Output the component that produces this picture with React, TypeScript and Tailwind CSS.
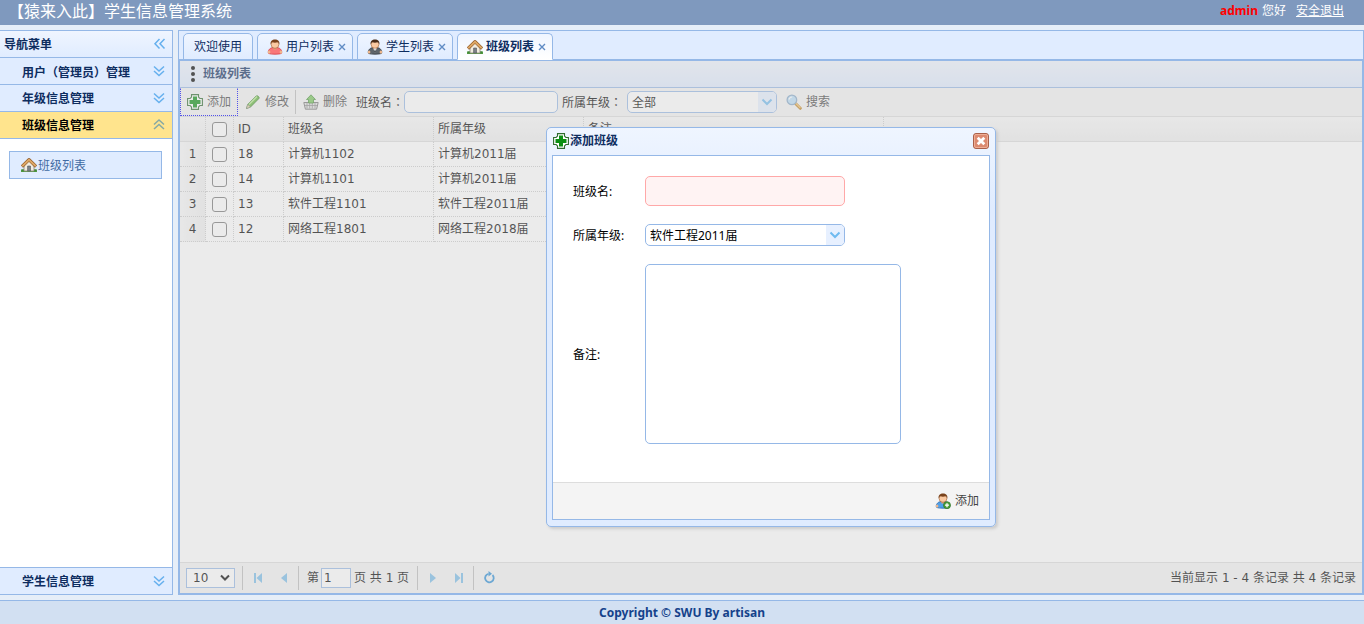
import type { ReactNode } from "react";

const rows = [
  { id: 18, name: "计算机1102", grade: "计算机2011届" },
  { id: 14, name: "计算机1101", grade: "计算机2011届" },
  { id: 13, name: "软件工程1101", grade: "软件工程2011届" },
  { id: 12, name: "网络工程1801", grade: "网络工程2018届" },
];

function HomeIcon() {
  return (
    <svg className="h-4 w-4 shrink-0" viewBox="0 0 16 16" aria-hidden="true">
      <path d="M0 13.200h16V15H0z" fill="#5fa04a" />
      <path d="M.3 12.200h3v2.200h-3zM12.700 12.200h3v2.200h-3z" fill="#3f8a35" />
      <path d="M3 7.500 8 3l5 4.500V14H3z" fill="#f1ece0" stroke="#8a8578" strokeWidth=".8" />
      <path d="M6.600 9h2.900v5H6.600z" fill="#7d8288" stroke="#54585c" strokeWidth=".6" />
      <path d="M.9 9.500 8 2.600l7.100 6.900" fill="none" stroke="#8a5420" strokeWidth="3.200" strokeLinejoin="round" />
      <path d="M1.200 9.200 8 2.700l6.800 6.500" fill="none" stroke="#dda766" strokeWidth="2" strokeLinejoin="round" />
    </svg>
  );
}

function PersonIcon({ tone }: { tone: "red" | "gray" | "blue" }) {
  const body = { red: "#f9777a", gray: "#5d646b", blue: "#4f9fe8" }[tone];
  const edge = { red: "#d93a40", gray: "#33383d", blue: "#2467ad" }[tone];
  return (
    <svg className="h-4 w-4 shrink-0" viewBox="0 0 16 16" aria-hidden="true">
      <path d="M1.500 14.300c-.8-2.300.7-5 3.700-5.600h5.600c3 .6 4.500 3.300 3.700 5.600-2 1.200-11 1.200-13 0z" fill={body} stroke={edge} strokeWidth=".8" />
      <ellipse cx="2.100" cy="13" rx="1.300" ry="1.500" fill="#f0b88c" />
      <ellipse cx="13.900" cy="13" rx="1.300" ry="1.500" fill="#f0b88c" />
      <path d="M6 8h4l-.6 2.400H6.600z" fill="#e5a478" />
      <ellipse cx="8" cy="5.500" rx="3.900" ry="3.800" fill="#fac9a1" stroke="#985c35" strokeWidth=".6" />
      <path d="M3.600 5.500C3.100 2 5.200.4 8 .4s4.900 1.600 4.400 5.100c-.5-1.500-1-2-1.800-2.200-1.900.6-3.500.6-5.200 0-.8.4-1.500 1-1.800 2.200z" fill={tone === "gray" ? "#4a2c18" : "#7a431c"} />
      {tone === "gray" && <path d="m6.500 9.500 1.500 4.300 1.500-4.300z" fill="#eef1f3" />}
      {tone === "gray" && <path d="m8 10 .6 2.500-.6 1-.6-1z" fill="#22272b" />}
      {tone === "blue" && (
        <>
          <circle cx="12" cy="12.200" r="3.500" fill="#4fa03d" stroke="#2d7224" strokeWidth=".7" />
          <path d="M12 10.200v4M10 12.200h4" stroke="#fff" strokeWidth="1.300" />
        </>
      )}
    </svg>
  );
}

function AddIcon() {
  return (
    <svg className="h-4 w-4 shrink-0" viewBox="0 0 16 16" aria-hidden="true">
      <path
        d="M4.500.6h7v2.500l1.400 1.400h2.500v7h-2.500l-1.400 1.400v2.500h-7v-2.500l-1.400-1.400H.6v-7h2.500l1.400-1.400z"
        fill="#fff"
        stroke="#2f6b2f"
        strokeWidth="1.100"
      />
      <path d="M6 2.500h4V6h3.500v4H10v3.500H6V10H2.500V6H6z" fill="#0b8f12" />
    </svg>
  );
}

function EditIcon() {
  return (
    <svg className="h-4 w-4 shrink-0" viewBox="0 0 16 16" aria-hidden="true">
      <path d="m1.500 14.500 1.200-4L11.200 2c1.200-1 3.700 1.200 2.700 2.500L5.500 13z" fill="#63b83e" stroke="#367d24" strokeWidth=".9" />
      <path d="m4 10.500 8-8" stroke="#b9eb91" strokeWidth="1.300" />
      <path d="m1.500 14.500 1.200-4L5.500 13z" fill="#e4d3a5" stroke="#777" strokeWidth=".5" />
    </svg>
  );
}

function RemoveIcon() {
  return (
    <svg className="h-4 w-4 shrink-0" viewBox="0 0 16 16" aria-hidden="true">
      <path d="M.8 8.500h14.400l-1.600 6.700H2.400z" fill="#e3e3e3" stroke="#777" />
      <path d="M4 9v5.500M6.700 9v5.500M9.300 9v5.500M12 9v5.500M2 11.500h12" stroke="#888" strokeWidth=".8" />
      <path d="m8 .8 4.500 4.700H10.500V9h-5V5.500h-2z" fill="#79c65a" stroke="#3c8a2d" strokeWidth=".8" />
    </svg>
  );
}

function SearchIcon() {
  return (
    <svg className="h-4 w-4 shrink-0" viewBox="0 0 16 16" aria-hidden="true">
      <path d="m9.500 9.500 4.800 4.800" stroke="#c18322" strokeWidth="3" strokeLinecap="round" />
      <path d="m10 9.500 4 4" stroke="#f3c36b" strokeWidth="1.200" strokeLinecap="round" />
      <circle cx="5.900" cy="5.900" r="4.800" fill="#b9def8" stroke="#88a9c9" strokeWidth="1.300" />
      <path d="M3 5.500c.4-1.600 1.600-2.500 3.200-2.500" fill="none" stroke="#fff" strokeWidth="1.200" />
    </svg>
  );
}

function CloseIcon() {
  return (
    <svg className="h-4 w-4" viewBox="0 0 16 16" aria-hidden="true">
      <rect x=".5" y=".5" width="15" height="15" rx="2.500" fill="#dc8a70" stroke="#a9604a" />
      <rect x="1.500" y="1.500" width="13" height="13" rx="1.500" fill="none" stroke="#eeae96" />
      <path d="m4.700 4.700 6.600 6.600M11.300 4.700l-6.600 6.600" stroke="#fff" strokeWidth="2.800" />
    </svg>
  );
}

function DoubleChevron({ dir }: { dir: "left" | "up" | "down" }) {
  const paths = {
    left: "M8.500 3 4 7.700l4.500 4.800M13.500 3 9 7.700l4.500 4.800",
    up: "m3 7.500 5-4.500 5 4.500M3 12l5-4.500 5 4.500",
    down: "m3 3.500 5 4.500 5-4.500M3 8l5 4.500L13 8",
  };
  return (
    <svg className="h-4 w-4 shrink-0" viewBox="0 0 16 16" aria-hidden="true">
      <path d={paths[dir]} fill="none" stroke={dir === "up" ? "#86a9a5" : "#66b0ee"} strokeWidth="1.500" />
    </svg>
  );
}

function Combo({ id, value, className }: { id: string; value: string; className: string }) {
  return (
    <div className={`relative h-[22px] overflow-hidden rounded-[5px] border border-[#95B8E7] bg-white ${className}`}>
      <select id={id} className="block h-5 w-full appearance-none bg-transparent pt-0.5 pl-1 text-xs outline-none">
        <option>{value}</option>
      </select>
      <span className="pointer-events-none absolute inset-y-0 right-0 flex w-[18px] items-center justify-center bg-[#E7F0FF]">
        <svg className="h-3 w-3" viewBox="0 0 12 12" aria-hidden="true">
          <path d="m1.500 3.500 4.500 4.500 4.500-4.500" fill="none" stroke="#6fbbf0" strokeWidth="2" />
        </svg>
      </span>
    </div>
  );
}

// Full-width punctuation sits in the middle of its box
function Mark({ children }: { children: string }) {
  return <span className="font-['Noto_Sans_CJK_TC',sans-serif]">{children}</span>;
}

function SidebarItem({ label, open = false, className = "" }: { label: ReactNode; open?: boolean; className?: string }) {
  return (
    <button
      type="button"
      aria-expanded={open}
      className={`flex h-[27px] w-full shrink-0 items-center justify-between border-b border-[#95B8E7] pr-[5px] pl-[22px] text-xs font-bold ${
        open ? "bg-[#FFE48D] text-black" : "bg-[#E0ECFF] text-[#0E2D5F]"
      } ${className}`}
    >
      <span className="pt-0.5">{label}</span>
      <DoubleChevron dir={open ? "up" : "down"} />
    </button>
  );
}

function Tab({ label, icon, active = false }: { label: string; icon: ReactNode; active?: boolean }) {
  return (
    <div
      className={`flex h-[27px] items-center rounded-t-[5px] border border-[#95B8E7] pr-[5px] pl-[9px] text-[#0E2D5F] ${
        active ? "border-b-white bg-linear-to-b from-[#EFF5FF] to-white font-bold" : "bg-linear-to-b from-[#EFF5FF] to-[#E0ECFF]"
      }`}
    >
      {icon}
      <button type="button" role="tab" aria-selected={active} className="ml-[3px] text-xs">
        {label}
      </button>
      <button type="button" aria-label={`关闭${label}`} className="ml-[3px]">
        <svg className="h-2.5 w-2.5" viewBox="0 0 10 10" aria-hidden="true">
          <path d="m2 2 6 6M8 2 2 8" stroke="#5f8bc4" strokeWidth="1.400" />
        </svg>
      </button>
    </div>
  );
}

function ToolButton({ label, icon, className = "" }: { label: string; icon: ReactNode; className?: string }) {
  return (
    <button type="button" className={`flex items-center gap-1 text-[#444] ${className}`}>
      {icon}
      {label}
    </button>
  );
}

function PageButton({ label, d }: { label: string; d: string }) {
  return (
    <button type="button" aria-label={label} className="flex h-[26px] w-[26px] items-center justify-center">
      <svg className="h-4 w-4" viewBox="0 0 16 16" aria-hidden="true">
        <path d={d} fill="#79bce9" />
      </svg>
    </button>
  );
}

function Divider() {
  return <span className="h-6 w-px bg-[#bbb]" />;
}

function Checkbox({ label }: { label: string }) {
  return (
    <input
      type="checkbox"
      aria-label={label}
      className="block h-[15px] w-[15px] appearance-none rounded-[3px] border border-[#767676] bg-white"
    />
  );
}

function DataTable() {
  const cell = "border-r border-b border-dotted border-[#ccc]";
  return (
    <table className="w-full table-fixed border-separate border-spacing-0 text-left">
      <colgroup>
        <col className="w-[26px]" />
        <col className="w-7" />
        <col className="w-[50px]" />
        <col className="w-[150px]" />
        <col className="w-[150px]" />
        <col className="w-[300px]" />
        <col />
      </colgroup>
      <thead>
        <tr className="h-[25px] bg-linear-to-b from-[#F9F9F9] to-[#EFEFEF] *:border-b *:border-b-[#ddd] *:font-normal">
          <th className="border-r border-r-[#ccc] [border-right-style:dotted]" />
          <th className="border-r border-r-[#ccc] pl-1.5 [border-right-style:dotted]">
            <Checkbox label="全选" />
          </th>
          <th className="border-r border-r-[#ccc] pl-1 [border-right-style:dotted]">ID</th>
          <th className="border-r border-r-[#ccc] pl-1 [border-right-style:dotted]">班级名</th>
          <th className="border-r border-r-[#ccc] pl-1 [border-right-style:dotted]">所属年级</th>
          <th className="border-r border-r-[#ccc] pl-1 [border-right-style:dotted]">备注</th>
          <th />
        </tr>
      </thead>
      <tbody>
        {rows.map((row, i) => (
          <tr key={row.id} className="h-[25px]">
            <td className={`${cell} bg-linear-to-r from-[#F9F9F9] to-[#EFEFEF] text-center`}>{i + 1}</td>
            <td className={`${cell} pl-1.5`}>
              <Checkbox label={row.name} />
            </td>
            <td className={`${cell} pl-1`}>{row.id}</td>
            <td className={`${cell} pl-1`}>{row.name}</td>
            <td className={`${cell} pl-1`}>{row.grade}</td>
            <td className={cell} />
            <td />
          </tr>
        ))}
      </tbody>
    </table>
  );
}

function AddDialog() {
  return (
    <div
      role="dialog"
      aria-label="添加班级"
      className="relative flex h-[400px] w-[450px] flex-col rounded-[5px] border border-[#95B8E7] bg-linear-to-b from-[#EFF5FF] to-[#E0ECFF] to-20% px-[5px] pb-1.5 font-['Noto_Sans','Noto_Sans_CJK_SC',sans-serif] text-xs shadow-[2px_2px_3px_#ccc]"
    >
      <div className="flex h-[27px] shrink-0 items-center justify-between px-px pb-0.5">
        <h2 className="flex items-center gap-px font-bold text-[#0E2D5F]">
          <AddIcon />
          添加班级
        </h2>
        <button type="button" aria-label="关闭">
          <CloseIcon />
        </button>
      </div>
      <form className="flex min-h-0 flex-1 flex-col border border-[#95B8E7] bg-white text-black">
        <div className="grid flex-1 grid-cols-[72px_1fr] content-start items-center gap-y-[18px] p-5">
          <label htmlFor="class-name" className="pt-0.5">
            班级名:
          </label>
          <input id="class-name" className="h-[30px] w-[200px] rounded-[5px] border border-[#ffa8a8] bg-[#fff3f3] px-1 outline-none" />
          <label htmlFor="class-grade" className="pt-0.5">
            所属年级:
          </label>
          <Combo id="class-grade" value="软件工程2011届" className="w-[200px]" />
          <label htmlFor="class-note" className="pt-0.5">
            备注:
          </label>
          <textarea id="class-note" className="block h-[180px] w-64 resize-none rounded-[5px] border border-[#95B8E7] bg-white p-1 outline-none" />
        </div>
        <div className="flex h-[37px] shrink-0 items-center justify-end border-t border-[#ddd] bg-[#F4F4F4] pr-2.5">
          <button type="button" className="flex items-center gap-1 text-[#444]">
            <PersonIcon tone="blue" />
            添加
          </button>
        </div>
      </form>
    </div>
  );
}

export default function App() {
  return (
    <div className="flex h-screen flex-col overflow-hidden bg-[#E6EEF8] font-['Noto_Sans','Noto_Sans_CJK_SC',sans-serif] text-xs">
      <header className="flex h-[25px] shrink-0 items-center justify-between bg-[#7F99BE] pr-5 pb-1 pl-2 text-white">
        <h1 className="text-base leading-5">【猿来入此】学生信息管理系统</h1>
        <div className="flex items-center">
          <span className="mr-1 font-bold text-[#f00]">admin</span>
          <span className="mr-2.5">您好</span>
          <a href="#logout" className="underline">
            安全退出
          </a>
        </div>
      </header>

      <div className="flex min-h-0 flex-1 gap-[5px] py-[5px]">
        <nav className="flex w-[173px] shrink-0 flex-col border-t border-r border-b border-[#95B8E7] bg-white">
          <div className="flex h-[27px] shrink-0 items-center justify-between border-b border-[#95B8E7] bg-linear-to-b from-[#EFF5FF] to-[#E0ECFF] pr-[5px] pl-1 font-bold text-[#0E2D5F]">
            <span className="pt-0.5">导航菜单</span>
            <DoubleChevron dir="left" />
          </div>
          <SidebarItem
            label={
              <>
                用户<Mark>（</Mark>管理员<Mark>）</Mark>管理
              </>
            }
          />
          <SidebarItem label="年级信息管理" />
          <SidebarItem label="班级信息管理" open />
          <div className="flex-1 py-3 pr-2.5 pl-[9px]">
            <a
              href="#classes"
              className="flex h-7 items-center border border-[#95B8E7] bg-[#E0ECFF] pl-[11px] text-[#416AA3]"
            >
              <HomeIcon />
              <span className="ml-px pt-0.5">班级列表</span>
            </a>
          </div>
          <SidebarItem label="学生信息管理" className="border-t border-b-0" />
        </nav>

        <main className="flex min-w-0 flex-1 flex-col border border-[#95B8E7]">
          <div role="tablist" className="flex h-[29px] shrink-0 items-start gap-1 border-b border-[#95B8E7] bg-[#E0ECFF] pt-0.5 pl-1">
            <button
              type="button"
              role="tab"
              aria-selected="false"
              className="h-[27px] rounded-t-[5px] border border-[#95B8E7] bg-linear-to-b from-[#EFF5FF] to-[#E0ECFF] px-2.5 text-[#0E2D5F]"
            >
              欢迎使用
            </button>
            <Tab label="用户列表" icon={<PersonIcon tone="red" />} />
            <Tab label="学生列表" icon={<PersonIcon tone="gray" />} />
            <Tab label="班级列表" icon={<HomeIcon />} active />
          </div>

          <section className="relative flex min-h-0 flex-1 flex-col border border-[#95B8E7] bg-white font-['DejaVu_Sans','Noto_Sans_CJK_SC',sans-serif]">
            <h2 className="flex h-[27px] shrink-0 items-center border-b border-[#95B8E7] bg-linear-to-b from-[#EFF5FF] to-[#E0ECFF] pl-[5px] font-bold text-[#0E2D5F]">
              <svg className="mr-0.5 h-4 w-4" viewBox="0 0 16 16" aria-hidden="true">
                <circle cx="8" cy="2" r="2" />
                <circle cx="8" cy="8" r="2" />
                <circle cx="8" cy="14" r="2" />
              </svg>
              班级列表
            </h2>
            <div className="flex h-[29px] shrink-0 items-center border-b border-[#ddd] bg-[#F4F4F4]">
              <ToolButton label="添加" icon={<AddIcon />} className="h-7 border border-dotted border-[#00f] border-t-transparent px-1.5" />
              <ToolButton label="修改" icon={<EditIcon />} className="pr-1.5 pl-[7px]" />
              <Divider />
              <ToolButton label="删除" icon={<RemoveIcon />} className="pr-[9px] pl-[7px]" />
              <label htmlFor="filter-name">
                班级名<Mark>：</Mark>
              </label>
              <input id="filter-name" className="mr-1 h-[22px] w-[154px] rounded-[5px] border border-[#95B8E7] bg-white px-1" />
              <label htmlFor="filter-grade" className="mr-[5px]">
                所属年级<Mark>：</Mark>
              </label>
              <Combo id="filter-grade" value="全部" className="w-[150px]" />
              <ToolButton label="搜索" icon={<SearchIcon />} className="ml-[9px]" />
            </div>
            <div className="min-h-0 flex-1">
              <DataTable />
            </div>
            <div className="flex h-[31px] shrink-0 items-center border-t border-[#ddd] bg-[#F4F4F4] pl-1.5">
              <div className="relative mr-[7px] h-5 w-[49px] border border-[#95B8E7] bg-white">
                <select aria-label="每页条数" className="block h-[18px] w-full appearance-none bg-transparent pl-1.5 outline-none">
                  <option>10</option>
                </select>
                <svg className="pointer-events-none absolute top-1 right-1 h-2.5 w-2.5" viewBox="0 0 10 10" aria-hidden="true">
                  <path d="m1 2.500 4 4 4-4" fill="none" stroke="#000" strokeWidth="2" />
                </svg>
              </div>
              <Divider />
              <div className="mr-px ml-0.5 flex">
                <PageButton label="首页" d="M4 3h2v10H4zM12 3v10L6.500 8z" />
                <PageButton label="上一页" d="M11 3v10L5 8z" />
              </div>
              <Divider />
              <label htmlFor="page" className="ml-2">
                第
              </label>
              <input id="page" defaultValue="1" className="mr-[3px] ml-0.5 h-5 w-[30px] border border-[#95B8E7] bg-white px-0.5 outline-none" />
              <span className="mr-2">页 共 1 页</span>
              <Divider />
              <div className="mr-px ml-0.5 flex">
                <PageButton label="下一页" d="M5 3v10l6-5z" />
                <PageButton label="末页" d="M4 3v10l5.500-5zM10 3h2v10h-2z" />
              </div>
              <Divider />
              <button type="button" aria-label="刷新" className="flex h-[26px] w-[30px] items-center justify-center">
                <svg className="h-4 w-4" viewBox="0 0 16 16" aria-hidden="true">
                  <path d="M11.500 5a4.300 4.300 0 1 1-4-1.200" fill="none" stroke="#2d8fd8" strokeWidth="1.800" />
                  <path d="M7.500 1v5.500L11 3.800z" fill="#2d8fd8" />
                </svg>
              </button>
              <span className="mr-1.5 ml-auto">当前显示 1 - 4 条记录 共 4 条记录</span>
            </div>

            <div className="absolute inset-0 flex items-center justify-center">
              <div className="absolute inset-0 bg-[#ccc]/40" />
              <AddDialog />
            </div>
          </section>
        </main>
      </div>

      <footer className="flex h-6 shrink-0 items-center justify-center border-t border-[#95B8E7] bg-[#D2E0F2] font-bold text-[#15428B]">
        Copyright © SWU By artisan
      </footer>
    </div>
  );
}
